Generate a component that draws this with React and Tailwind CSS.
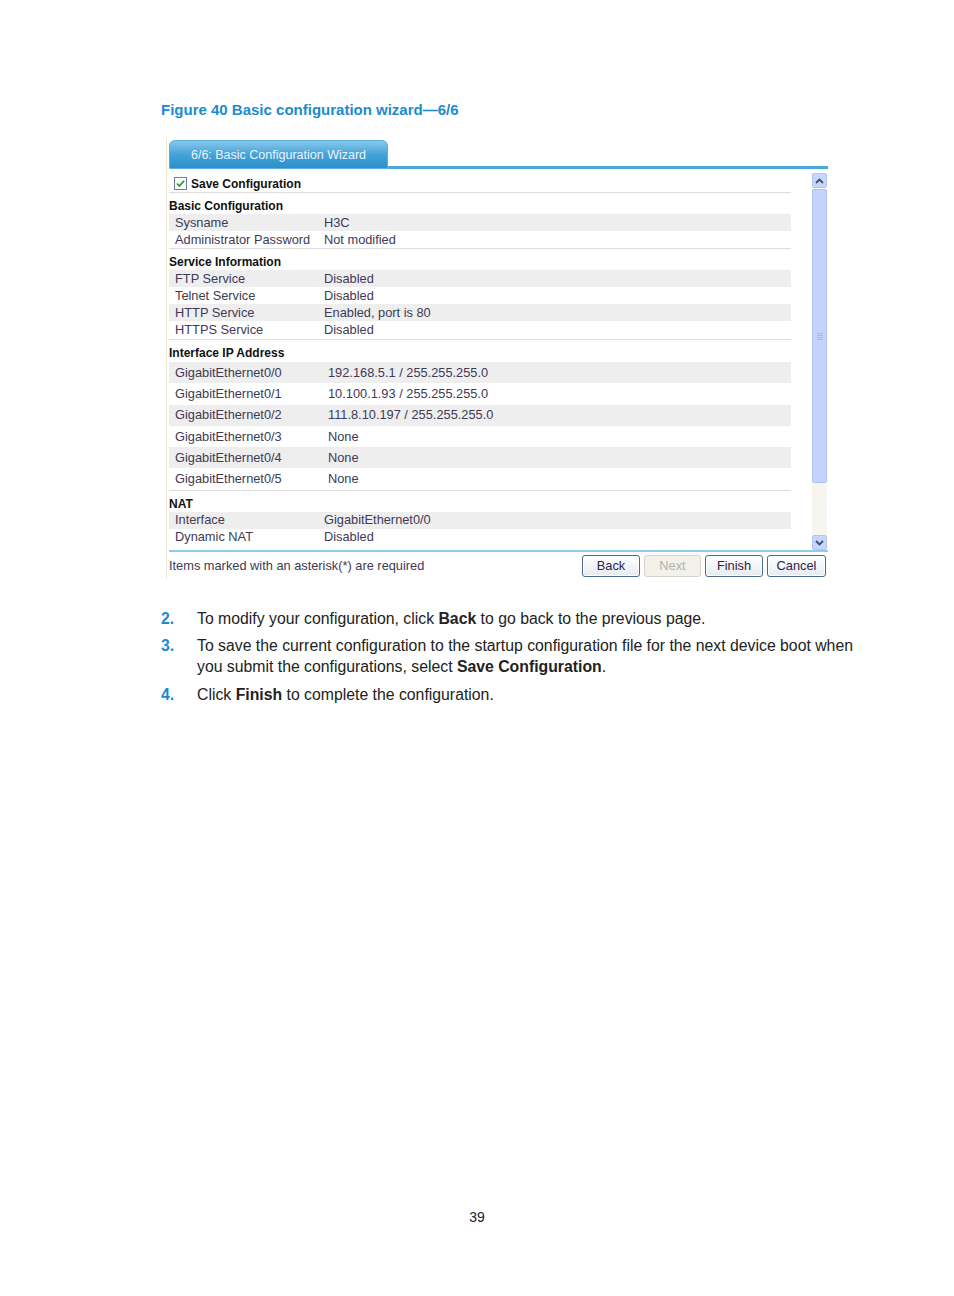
import React from "react";

const Row = ({ label, value, shade, tall, wide }) => (
  <div
    className={`flex items-center text-[12.8px] ${tall ? "h-[21.3px]" : "h-[17px]"} ${
      shade ? "bg-[#eeeeee]" : "bg-white"
    }`}
  >
    <span className="w-[155px] pl-[6px] shrink-0 text-[#403a55]">{label}</span>
    <span className={`${wide ? "pl-[4px]" : ""} text-[#403a55]`}>{value}</span>
  </div>
);

const Header = ({ children, h = "h-[21px]" }) => (
  <div className={`${h} pt-[6px] leading-[14px] font-bold text-[#111]`}>{children}</div>
);

const Btn = ({ children, w, disabled }) => (
  <button
    className={`${w} h-[22px] rounded-[3px] border text-[12.8px] leading-[20px] ${
      disabled
        ? "border-[#d6d4c8] bg-[#f3f2ea] text-[#b3b1a8]"
        : "border-[#4b6a8c] bg-gradient-to-b from-white to-[#e6ebf1] text-[#2c2448] shadow-[inset_0_0_0_1px_#ffffff]"
    }`}
  >
    {children}
  </button>
);

const Chevron = ({ up }) => (
  <svg width="9" height="6" viewBox="0 0 9 6">
    <path
      d={up ? "M1 5 L4.5 1.5 L8 5" : "M1 1 L4.5 4.5 L8 1"}
      fill="none"
      stroke="#3e4f73"
      strokeWidth="1.8"
    />
  </svg>
);

const App = () => {
  return (
    <div className="min-h-[1296px] bg-white font-['Liberation_Sans',Arial,sans-serif] flex flex-col">
      <div className="pt-[101px] pl-[161px]">
        <p className="h-[18px] leading-[18px] text-[15px] font-semibold text-[#1b8bcf]">
          Figure 40 Basic configuration wizard—6/6
        </p>

        {/* screenshot */}
        <div className="mt-[20px] ml-[5px] w-[662px] border-l border-[#ece6d2] pl-[2px] text-[12px] leading-[14px]">
          <div className="flex items-end h-[30px]">
            <div className="w-[219px] h-[29px] rounded-t-[6px] bg-gradient-to-b from-[#86c8ec] via-[#44a3d8] to-[#2a8fca] border border-[#5aafdd] text-[#eaf4fb] text-[12.5px] flex items-center justify-center">
              6/6: Basic Configuration Wizard
            </div>
            <div className="flex-1 h-[3px] bg-[#4aa8da]"></div>
          </div>

          <div className="flex mt-[4px] h-[377px]">
            <div className="w-[622px] flex flex-col">
              <div className="h-[20px] flex items-center border-b border-[#dddddd] pt-[2px]">
                <svg className="ml-[5px] mr-[4px]" width="13" height="13" viewBox="0 0 13 13">
                  <rect x="0.5" y="0.5" width="12" height="12" fill="#fdfdfd" stroke="#6e819c" />
                  <path d="M3 6.5 L5.4 9 L10 3.8" fill="none" stroke="#22a22a" strokeWidth="1.8" />
                </svg>
                <span className="font-bold text-[#111]">Save Configuration</span>
              </div>

              <Header>Basic Configuration</Header>
              <Row label="Sysname" value="H3C" shade />
              <Row label="Administrator Password" value="Not modified" />
              <div className="border-b border-[#dddddd]"></div>

              <Header>Service Information</Header>
              <Row label="FTP Service" value="Disabled" shade />
              <Row label="Telnet Service" value="Disabled" />
              <Row label="HTTP Service" value="Enabled, port is 80" shade />
              <Row label="HTTPS Service" value="Disabled" />
              <div className="h-[1px]"></div>
              <div className="border-b border-[#dddddd]"></div>

              <Header h="h-[22px]">Interface IP Address</Header>
              <Row label="GigabitEthernet0/0" value="192.168.5.1 / 255.255.255.0" shade tall wide />
              <Row label="GigabitEthernet0/1" value="10.100.1.93 / 255.255.255.0" tall wide />
              <Row label="GigabitEthernet0/2" value="111.8.10.197 / 255.255.255.0" shade tall wide />
              <Row label="GigabitEthernet0/3" value="None" tall wide />
              <Row label="GigabitEthernet0/4" value="None" shade tall wide />
              <Row label="GigabitEthernet0/5" value="None" tall wide />
              <div className="border-b border-[#dddddd]"></div>

              <Header>NAT</Header>
              <Row label="Interface" value="GigabitEthernet0/0" shade />
              <Row label="Dynamic NAT" value="Disabled" />
            </div>

            {/* scrollbar */}
            <div className="ml-[21px] w-[15px] flex flex-col">
              <div className="h-[15px] rounded-[2px] bg-[#c6d5fb] border border-[#b3c5ee] flex items-center justify-center">
                <Chevron up />
              </div>
              <div className="mt-[1px] h-[294px] rounded-[2px] bg-[#c3d3fb] border border-[#b0c2ee] flex items-center justify-center">
                <div className="w-[6px] flex flex-col gap-[1px]">
                  <div className="h-[1px] bg-[#a8bbe8]"></div>
                  <div className="h-[1px] bg-[#a8bbe8]"></div>
                  <div className="h-[1px] bg-[#a8bbe8]"></div>
                  <div className="h-[1px] bg-[#a8bbe8]"></div>
                </div>
              </div>
              <div className="flex-1 bg-[#f6f5ef]"></div>
              <div className="h-[15px] rounded-[2px] bg-[#c6d5fb] border border-[#b3c5ee] flex items-center justify-center">
                <Chevron />
              </div>
            </div>
          </div>

          <div className="h-[2px] bg-[#8fcbea]"></div>

          <div className="flex items-start h-[27px] pr-[2px]">
            <span className="mt-[7px] text-[12.8px] text-[#403a55]">Items marked with an asterisk(*) are required</span>
            <div className="ml-auto mt-[3px] flex gap-[4px]">
              <Btn w="w-[58px]">Back</Btn>
              <Btn w="w-[57px]" disabled>Next</Btn>
              <Btn w="w-[58px]">Finish</Btn>
              <Btn w="w-[59px]">Cancel</Btn>
            </div>
          </div>
        </div>

        {/* steps */}
        <div className="mt-[29px] text-[15.8px] leading-[21px] text-[#222] w-[700px]">
          <div className="flex">
            <span className="w-[36px] shrink-0 font-bold text-[#1b8bcf]">2.</span>
            <p>
              To modify your configuration, click <b>Back</b> to go back to the previous page.
            </p>
          </div>
          <div className="flex mt-[6px]">
            <span className="w-[36px] shrink-0 font-bold text-[#1b8bcf]">3.</span>
            <p className="w-[664px]">
              To save the current configuration to the startup configuration file for the next device boot when
              you submit the configurations, select <b>Save Configuration</b>.
            </p>
          </div>
          <div className="flex mt-[7px]">
            <span className="w-[36px] shrink-0 font-bold text-[#1b8bcf]">4.</span>
            <p>
              Click <b>Finish</b> to complete the configuration.
            </p>
          </div>
        </div>
      </div>

      <div className="mt-[503px] text-center text-[14px] leading-[18px] text-[#222]">39</div>
    </div>
  );
};

export default App;
